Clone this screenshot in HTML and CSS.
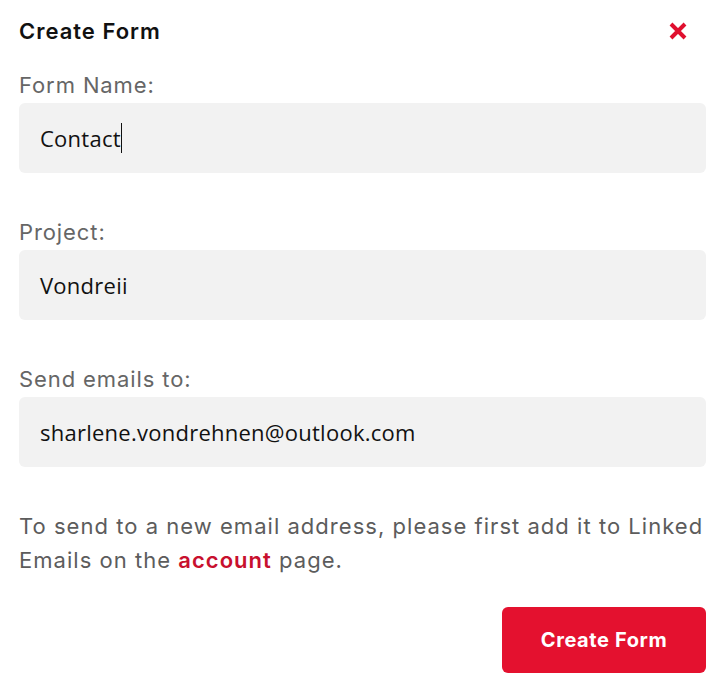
FILE: index.html
```html
<!DOCTYPE html>
<html lang="en">
<head>
<meta charset="utf-8">
<title>Create Form</title>
<link rel="stylesheet" href="styles.css">
</head>
<body>
<div class="modal">
  <div class="header">
    <h1 class="title">Create Form</h1>
    <button class="close" aria-label="Close">
      <svg width="20" height="20" viewBox="0 0 20 20"><path d="M3 3 L17 17 M17 3 L3 17" stroke="#e0102f" stroke-width="4" stroke-linecap="butt"/></svg>
    </button>
  </div>
  <div class="field">
    <label class="label">Form Name:</label>
    <div class="input"><span>Contact</span><span class="caret"></span></div>
  </div>
  <div class="field">
    <label class="label">Project:</label>
    <div class="input"><span>Vondreii</span></div>
  </div>
  <div class="field field-last">
    <label class="label">Send emails to:</label>
    <div class="input"><span>sharlene.vondrehnen@outlook.com</span></div>
  </div>
  <p class="note">To send to a new email address, please first add it to Linked Emails on the <a class="link" href="#">account</a> page.</p>
  <div class="actions">
    <button class="primary">Create Form</button>
  </div>
</div>
</body>
</html>
```
FILE: styles.css
```css
* { box-sizing: border-box; }
html, body { margin: 0; padding: 0; background: #fff; }
body { font-family: Inter, "Liberation Sans", sans-serif; }
.modal { padding: 14px 21px 0 19px; width: 727px; }
.header { display: flex; justify-content: space-between; align-items: center; height: 34px; margin-bottom: 23px; }
.title { margin: 0; font-size: 22px; font-weight: 600; color: #111; letter-spacing: 1px; }
.close { background: none; border: 0; padding: 0; margin-right: 18px; width: 20px; height: 20px; display: flex; }
.field { display: flex; flex-direction: column; margin-bottom: 45px; }
.field-last { margin-bottom: 42px; }
.label { font-size: 22px; color: #666; line-height: 28px; margin-bottom: 4px; letter-spacing: 0.9px; }
.input { height: 70px; background: #f2f2f2; border-radius: 6px; padding: 0 21px; display: flex; align-items: center; font-family: "Open Sans", sans-serif; font-size: 22px; color: #111; letter-spacing: 0.25px; }
.caret { display: inline-block; width: 1px; height: 30px; background: #111; }
.note { margin: 0; font-size: 22px; line-height: 34px; color: #5c5c5c; letter-spacing: 1.03px; }
.link { color: #c8102e; font-weight: 600; text-decoration: none; }
.actions { display: flex; justify-content: flex-end; margin-top: 30px; }
.primary { width: 204px; height: 66px; background: #e4112f; color: #fff; border: 0; border-radius: 6px; font-family: Inter, sans-serif; font-size: 20px; font-weight: 700; letter-spacing: 0.6px; }
```
